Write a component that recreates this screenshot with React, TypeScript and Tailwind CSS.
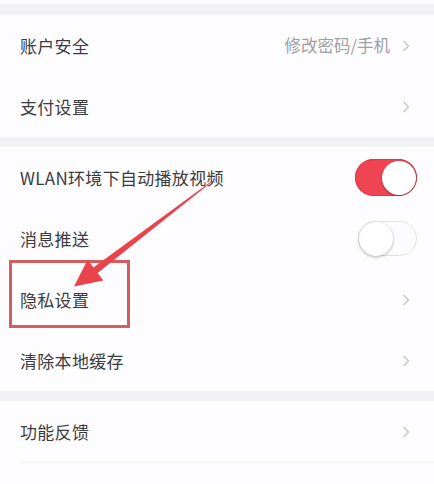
import { ReactNode } from "react";

type Row = {
  label: string;
  extra?: string;
  toggle?: "on" | "off";
};

const groups: Row[][] = [
  [{ label: "账户安全", extra: "修改密码/手机" }, { label: "支付设置" }],
  [
    { label: "WLAN环境下自动播放视频", toggle: "on" },
    { label: "消息推送", toggle: "off" },
    { label: "隐私设置" },
    { label: "清除本地缓存" },
  ],
];

function Chevron() {
  return (
    <svg width="8" height="12" viewBox="0 0 8 12" className="ml-3">
      <polyline points="1.5,1 6.5,6 1.5,11" fill="none" stroke="#c4c3c8" strokeWidth="1.3" />
    </svg>
  );
}

function Toggle({ on }: { on: boolean }) {
  if (on) {
    return (
      <div className="w-[62px] h-[37px] rounded-full bg-[#ef4451] flex items-center justify-end pr-[1px] shadow-[inset_0_0_0_1px_#d93a46]">
        <div className="w-[34px] h-[34px] rounded-full bg-white shadow-[0_1px_2px_rgba(0,0,0,0.3)]" />
      </div>
    );
  }
  return (
    <div className="w-[59px] h-[35px] rounded-full bg-[#fcfbfd] border border-[#e2e1e5] flex items-center">
      <div className="w-[34px] h-[34px] rounded-full bg-white shadow-[0_1px_3px_rgba(0,0,0,0.3)]" />
    </div>
  );
}

function SettingRow({ row }: { row: Row }) {
  let right: ReactNode = <Chevron />;
  if (row.toggle) right = <Toggle on={row.toggle === "on"} />;
  return (
    <div className="h-[61px] flex items-center justify-between pl-5">
      <span className="text-[17px] text-[#3c3c3e] tracking-[0.3px]">{row.label}</span>
      <div className={`flex items-center ${row.toggle ? "pr-[17px]" : "pr-6"}`}>
        {row.extra && <span className="text-[16.5px] text-[#a09fa4]">{row.extra}</span>}
        {right}
      </div>
    </div>
  );
}

export default function App() {
  return (
    <div
      className="relative w-[434px] h-[484px] overflow-hidden bg-[#f2f1f4]"
      style={{ fontFamily: '"Noto Sans CJK SC", "Noto Sans", sans-serif' }}
    >
      <div className="h-1 bg-[#fdfcfe]" />
      <div className="h-[11px]" />

      {groups.map((rows, i) => (
        <div key={i}>
          <div className="bg-[#fdfcfe]">
            {rows.map((r) => (
              <SettingRow key={r.label} row={r} />
            ))}
          </div>
          <div className="h-[10px]" />
        </div>
      ))}

      <div className="bg-[#fdfcfe]">
        <div className="border-b border-[#f1f0f3] ml-5">
          <div className="-ml-5">
            <SettingRow row={{ label: "功能反馈" }} />
          </div>
        </div>
        <div className="h-[61px] flex items-center pl-5">
          <span className="text-[17px] text-[#333] opacity-20">关于我们</span>
        </div>
      </div>

      {/* 标注：红框 + 箭头 */}
      <div className="absolute left-[9px] top-[260px] w-[121px] h-[68px] border-[3px] border-[#d65c5e]" />
      <svg className="absolute left-0 top-0" width="434" height="484" viewBox="0 0 434 484">
        <polygon
          points="211.4,182.3 97.6,273.0 103.4,280.6 74,286.5 87.6,259.8 93.4,267.4 210.6,181.7"
          fill="#e9444c"
        />
      </svg>
    </div>
  );
}
